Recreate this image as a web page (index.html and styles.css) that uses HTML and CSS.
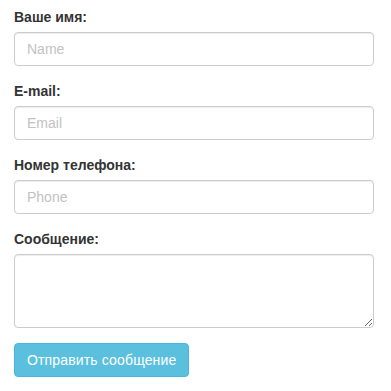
FILE: index.html
```html
<!DOCTYPE html>
<html lang="ru">
<head>
<meta charset="utf-8">
<link rel="stylesheet" href="styles.css">
</head>
<body>
<form class="contact-form">
  <div class="form-group">
    <label class="form-label" for="name">Ваше имя:</label>
    <input class="form-control" id="name" type="text" placeholder="Name">
  </div>
  <div class="form-group">
    <label class="form-label" for="email">E-mail:</label>
    <input class="form-control" id="email" type="text" placeholder="Email">
  </div>
  <div class="form-group">
    <label class="form-label" for="phone">Номер телефона:</label>
    <input class="form-control" id="phone" type="text" placeholder="Phone">
  </div>
  <div class="form-group">
    <label class="form-label" for="msg">Сообщение:</label>
    <textarea class="form-control form-textarea" id="msg" rows="3"></textarea>
  </div>
  <button class="btn-info" type="button">Отправить сообщение</button>
</form>
</body>
</html>
```
FILE: styles.css
```css
html, body {
  margin: 0;
  padding: 0;
  background: #fff;
}
body {
  font-family: "Liberation Sans", Arial, sans-serif;
  font-size: 14px;
  line-height: 20px;
  color: #333;
}
.contact-form {
  display: flex;
  flex-direction: column;
  align-items: flex-start;
  padding: 7px 17px 0 14px;
}
.form-group {
  display: flex;
  flex-direction: column;
  align-self: stretch;
  margin-bottom: 15px;
}
.form-label {
  font-weight: bold;
  margin-bottom: 5px;
  line-height: 20px;
}
.form-control {
  box-sizing: border-box;
  display: block;
  width: 100%;
  height: 34px;
  padding: 6px 12px;
  font-family: inherit;
  font-size: 14px;
  line-height: 20px;
  color: #555;
  background: #fff;
  border: 1px solid #ccc;
  border-radius: 4px;
  box-shadow: inset 0 1px 1px rgba(0,0,0,.075);
  margin: 0;
  outline: none;
}
.form-control::placeholder {
  color: #c2c2c2;
}
.form-textarea {
  height: 74px;
  resize: vertical;
}
.btn-info {
  box-sizing: border-box;
  height: 34px;
  padding: 6px 12px;
  font-family: inherit;
  font-size: 14px;
  line-height: 20px;
  letter-spacing: 0.15px;
  color: #fff;
  background: #5bc0de;
  border: 1px solid #46b8da;
  border-radius: 4px;
  cursor: pointer;
}
```
